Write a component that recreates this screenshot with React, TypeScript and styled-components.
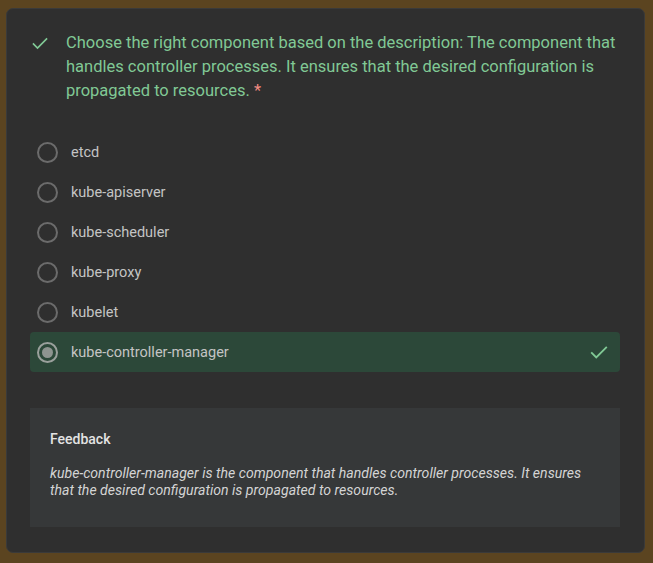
import React from "react";
import styled, { createGlobalStyle } from "styled-components";

const Global = createGlobalStyle`
  html, body { margin: 0; padding: 0; background: #5b4420; }
  body { font-family: Roboto, "Noto Sans", sans-serif; }
`;

const Page = styled.div`
  width: 653px;
  height: 563px;
  box-sizing: border-box;
  padding: 8px 8px 10px 6px;
  background: #5b4420;
`;

const Card = styled.div`
  box-sizing: border-box;
  height: 100%;
  background: #2f2f2f;
  border: 1px solid #3a3a3a;
  border-radius: 7px;
  padding: 22px 24px 25px 23px;
  display: flex;
  flex-direction: column;
`;

const Question = styled.div`
  display: flex;
  gap: 16px;
`;

const QText = styled.div`
  color: #81c995;
  font-size: 16.5px;
  line-height: 24px;
`;

const Star = styled.span`
  color: #f28b82;
`;

const Options = styled.div`
  display: flex;
  flex-direction: column;
  margin-top: 29px;
`;

const Row = styled.div<{ $selected?: boolean }>`
  display: flex;
  align-items: center;
  height: 40px;
  padding: 0 10px 0 7px;
  border-radius: 4px;
  background: ${(p) => (p.$selected ? "#2c4839" : "transparent")};
`;

const Radio = styled.span<{ $checked?: boolean }>`
  box-sizing: border-box;
  width: 21px;
  height: 21px;
  border-radius: 50%;
  border: 2px solid ${(p) => (p.$checked ? "#9aa09c" : "#6b6b6b")};
  display: flex;
  align-items: center;
  justify-content: center;
  flex: none;
  &::after {
    content: "";
    display: ${(p) => (p.$checked ? "block" : "none")};
    width: 11px;
    height: 11px;
    border-radius: 50%;
    background: #8e9490;
  }
`;

const Label = styled.span`
  margin-left: 13px;
  color: #c4c4c4;
  font-size: 14.5px;
  flex: 1;
`;

const Feedback = styled.div`
  margin-top: 36px;
  background: #363839;
  padding: 22px 20px 28px 20px;
  display: flex;
  flex-direction: column;
  gap: 17px;
`;

const FTitle = styled.div`
  color: #e3e3e3;
  font-weight: 500;
  font-size: 14px;
  line-height: 18px;
`;

const FText = styled.div`
  color: #d4d4d4;
  font-style: italic;
  font-size: 14.1px;
  line-height: 17px;
`;

const IconWrap = styled.div`
  padding-top: 2px;
  flex: none;
`;

const Check = ({ size = 18 }: { size?: number }) => (
  <svg width={size} height={size} viewBox="0 0 24 24" style={{ flex: "none", display: "block" }}>
    <path d="M3.5 12.5 L9 18 L20.5 6.5" fill="none" stroke="#81c995" strokeWidth="2" />
  </svg>
);

const options = ["etcd", "kube-apiserver", "kube-scheduler", "kube-proxy", "kubelet", "kube-controller-manager"];

export default function App() {
  return (
    <Page>
      <Global />
      <Card>
        <Question>
          <IconWrap>
            <Check size={20} />
          </IconWrap>
          <QText>
            Choose the right component based on the description: The component that handles controller processes. It
            ensures that the desired configuration is propagated to resources. <Star>*</Star>
          </QText>
        </Question>
        <Options>
          {options.map((o, i) => {
            const sel = i === options.length - 1;
            return (
              <Row key={o} $selected={sel}>
                <Radio $checked={sel} />
                <Label>{o}</Label>
                {sel && <Check size={22} />}
              </Row>
            );
          })}
        </Options>
        <Feedback>
          <FTitle>Feedback</FTitle>
          <FText>
            kube-controller-manager is the component that handles controller processes. It ensures that the desired
            configuration is propagated to resources.
          </FText>
        </Feedback>
      </Card>
    </Page>
  );
}
